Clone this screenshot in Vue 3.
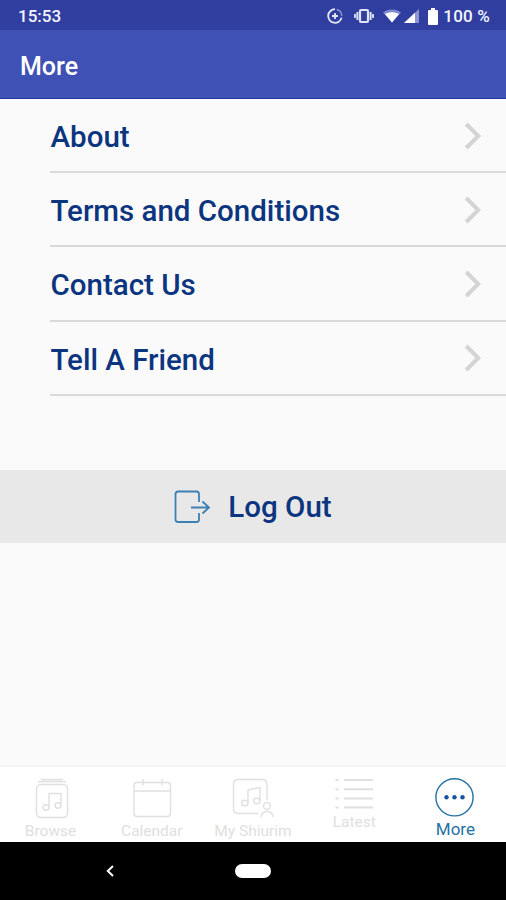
<template>
  <div class="screen">
    <!-- Status bar -->
    <div class="status-bar">
      <span class="status-time">15:53</span>
      <div class="status-icons">
        <svg class="icon-sync" width="16" height="16" viewBox="0 0 16 16" fill="none" stroke="#e4e7f8">
          <path d="M8 1.2A6.8 6.8 0 1 0 14.6 9.6" stroke-width="1.8" />
          <path d="M9.8 1.5A6.8 6.8 0 0 1 14.8 8" stroke-width="1.5" opacity="0.5" />
          <path d="M8 5v6M5 8h6" stroke-width="1.8" />
        </svg>
        <svg class="icon-vibrate" width="20" height="16" viewBox="0 0 20 16" fill="none" stroke="#dfe3f6">
          <rect x="6" y="2" width="8" height="12" rx="1" stroke-width="2.2" />
          <path d="M3.4 4v8M16.6 4v8" stroke-width="2" />
          <path d="M1 6v4M19 6v4" stroke-width="1.8" />
        </svg>
        <svg class="icon-wifi" width="18" height="14" viewBox="0 0 18 14">
          <path d="M0 3.4C5 -.5 13 -.5 18 3.4L9 13.6Z" fill="#7f89cb" />
          <path d="M2 5C6.4 2.8 11.6 2.8 16 5L9 13.6Z" fill="#fff" />
        </svg>
        <svg class="icon-signal" width="15" height="14" viewBox="0 0 15 14">
          <path d="M15 0V14H0Z" fill="#8d96d2" />
          <path d="M11 3.7V14H0Z" fill="#fff" />
        </svg>
        <svg class="icon-battery" width="10" height="17" viewBox="0 0 10 17">
          <path d="M3 0h4v2h2q1 0 1 1v13q0 1-1 1H1q-1 0-1-1V3q0-1 1-1h2z" fill="#fff" />
        </svg>
        <span class="status-battery">100 %</span>
      </div>
    </div>

    <!-- Header -->
    <header class="header">
      <h1 class="header-title">More</h1>
    </header>

    <main class="content">
      <ul class="menu">
        <li v-for="item in menuItems" :key="item" class="menu-item">
          <span class="menu-label">{{ item }}</span>
          <svg class="chevron" width="18" height="28" viewBox="0 0 18 28" fill="none" stroke="#d4d4d4" stroke-width="4">
            <path d="M2.2 2L14.2 14L2.2 26" />
          </svg>
        </li>
      </ul>

      <button class="btn-logout" type="button">
        <svg width="37" height="34" viewBox="0 0 37 34" fill="none" stroke="#3c80b4" stroke-width="1.8">
          <path d="M25 12V4Q25 1.5 22.5 1.5H4Q1.5 1.5 1.5 4V29.5Q1.5 32 4 32H22.5Q25 32 25 29.5V23" />
          <path d="M17 17.5H35M28.5 11.5L35 17.5L28.5 23.5" />
        </svg>
        <span>Log Out</span>
      </button>
    </main>

    <!-- Tabs -->
    <nav class="tab-bar">
      <div
        v-for="tab in tabs"
        :key="tab.name"
        class="tab"
        :class="{ active: tab.name === activeTab }"
      >
        <svg v-if="tab.name === 'browse'" class="tab-icon" width="40" height="42" viewBox="0 0 40 42">
          <path d="M10 1.5H32M7 4.5Q8 3.5 10 3.5H32Q34 3.5 35 4.5" />
          <rect x="5.5" y="6.5" width="31" height="33" rx="4.5" />
          <path d="M18 29V15.5H30V27" />
          <ellipse cx="15" cy="29.5" rx="3" ry="2.7" />
          <ellipse cx="27" cy="27.5" rx="3" ry="2.7" />
        </svg>
        <svg v-else-if="tab.name === 'calendar'" class="tab-icon" width="40" height="42" viewBox="0 0 40 42">
          <rect x="2" y="4.5" width="36.5" height="34" rx="3" />
          <path d="M2 13H38.5M11 1V7.5M30 1V7.5" />
        </svg>
        <svg v-else-if="tab.name === 'shiurim'" class="tab-icon" width="42" height="42" viewBox="0 0 42 42">
          <path d="M26 35.5H6.5Q1.5 35.5 1.5 30.5V6.5Q1.5 1.5 6.5 1.5H30Q35 1.5 35 6.5V22" />
          <path d="M16 24V12L28 9.5V22" />
          <ellipse cx="12.8" cy="25" rx="3.2" ry="2.8" />
          <ellipse cx="24.8" cy="23" rx="3.2" ry="2.8" />
          <circle cx="35" cy="28" r="3.5" />
          <path d="M29 39Q29.5 33.5 35 33.5T41 39" />
        </svg>
        <svg v-else-if="tab.name === 'latest'" class="tab-icon" width="40" height="33" viewBox="0 0 40 33">
          <path d="M10 2H39M10 11.2H39M10 20.4H39M10 29.5H39" stroke-width="2" />
          <path d="M1.5 2H4.5M1.5 11.2H4.5M1.5 20.4H4.5M1.5 29.5H4.5" stroke-width="2" />
        </svg>
        <svg v-else class="tab-icon" width="40" height="40" viewBox="0 0 40 40">
          <circle cx="19.5" cy="19.3" r="18.6" />
          <g class="dots">
            <circle cx="11.5" cy="19.2" r="2.2" />
            <circle cx="19.5" cy="19.2" r="2.2" />
            <circle cx="27.5" cy="19.2" r="2.2" />
          </g>
        </svg>
        <span class="tab-label">{{ tab.label }}</span>
      </div>
    </nav>

    <!-- Android navigation -->
    <div class="system-nav">
      <svg class="nav-back" width="8" height="12" viewBox="0 0 8 12" fill="none" stroke="#fff" stroke-width="2">
        <path d="M7 1L1.8 6L7 11" />
      </svg>
      <span class="nav-home"></span>
    </div>
  </div>
</template>

<script setup>
import { ref } from 'vue'

const menuItems = ['About', 'Terms and Conditions', 'Contact Us', 'Tell A Friend']

const tabs = [
  { name: 'browse', label: 'Browse' },
  { name: 'calendar', label: 'Calendar' },
  { name: 'shiurim', label: 'My Shiurim' },
  { name: 'latest', label: 'Latest' },
  { name: 'more', label: 'More' },
]

const activeTab = ref('more')
</script>

<style>
body {
  margin: 0;
}
</style>

<style scoped>
.screen {
  display: flex;
  flex-direction: column;
  width: 506px;
  height: 900px;
  overflow: hidden;
  background: #fafafa;
  font-family: Roboto, "Liberation Sans", sans-serif;
}

/* Status bar */
.status-bar {
  display: flex;
  align-items: center;
  justify-content: space-between;
  height: 30px;
  padding: 2px 16px 0 18px;
  box-sizing: border-box;
  background: #303f9f;
  color: #f4f5ff;
  font-size: 17px;
  font-weight: 500;
}

.status-icons {
  display: flex;
  align-items: center;
}

.icon-vibrate {
  margin-left: 11px;
}

.icon-wifi {
  margin-left: 9px;
}

.icon-signal {
  margin-left: 3px;
}

.icon-battery {
  margin: 0 5px 0 9px;
}

.status-battery {
  letter-spacing: 0.2px;
}

/* Header */
.header {
  display: flex;
  align-items: center;
  height: 69px;
  padding: 4px 20px 0;
  box-sizing: border-box;
  background: #3f51b5;
  border-bottom: 1px solid #2438a2;
}

.header-title {
  margin: 0;
  font-size: 25px;
  font-weight: 500;
  color: #ffffff;
}

.content {
  flex: 1;
}

.menu {
  margin: 0;
  padding: 0 0 0 50px;
  list-style: none;
}

.menu-item {
  display: flex;
  align-items: center;
  justify-content: space-between;
  height: 74.2px;
  padding: 1px 24px 0 0.5px;
  box-sizing: border-box;
  border-bottom: 2px solid #dadada;
  font-size: 29.5px;
  font-weight: 500;
  color: #0c3580;
}

.menu-label {
  padding-top: 3px;
}

.btn-logout {
  display: flex;
  align-items: center;
  justify-content: center;
  gap: 17px;
  width: 100%;
  height: 73px;
  margin-top: 74px;
  padding: 1px 0 0;
  border: none;
  background: #e8e8e8;
  font-family: inherit;
  font-size: 29.5px;
  font-weight: 500;
  color: #0c3580;
}

/* Tabs */
.tab-bar {
  display: flex;
  height: 77px;
  box-sizing: border-box;
  padding-top: 11px;
  border-top: 2px solid #f4f4f4;
  background: #ffffff;
}

.tab {
  display: flex;
  flex: 1;
  flex-direction: column;
  align-items: center;
  color: #e0e0e0;
  font-size: 15.5px;
}

.tab-icon {
  fill: none;
  stroke: currentColor;
  stroke-width: 1.4;
}

.tab-label {
  padding-top: 1px;
  line-height: 20px;
  white-space: nowrap;
}

.tab.active {
  color: #2472a4;
  font-size: 17px;
}

.dots {
  fill: #1554a0;
  stroke: none;
}

/* Android navigation */
.system-nav {
  display: grid;
  grid-template-columns: 1fr 36px 1fr;
  align-items: center;
  height: 58px;
  background: #000000;
}

.nav-back {
  margin-left: 106px;
}

.nav-home {
  height: 14px;
  border-radius: 7px;
  background: #ffffff;
}
</style>
